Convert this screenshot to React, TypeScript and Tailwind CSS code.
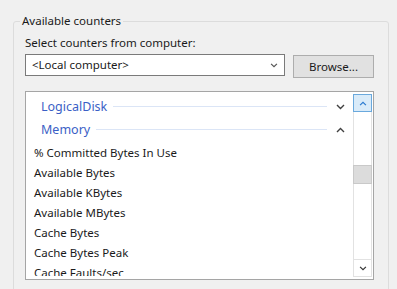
import React from "react";

const Chevron = ({ up = false, color = "#404040", w = 9, h = 6 }: { up?: boolean; color?: string; w?: number; h?: number }) => (
  <svg width={w} height={h} viewBox="0 0 9 6" fill="none">
    {up ? (
      <polyline points="1,5 4.5,1.5 8,5" stroke={color} strokeWidth="1.4" />
    ) : (
      <polyline points="1,1 4.5,4.5 8,1" stroke={color} strokeWidth="1.4" />
    )}
  </svg>
);

const items = [
  "% Committed Bytes In Use",
  "Available Bytes",
  "Available KBytes",
  "Available MBytes",
  "Cache Bytes",
  "Cache Bytes Peak",
  "Cache Faults/sec",
];

const Header = ({ label, up }: { label: string; up: boolean }) => (
  <div className="flex items-center h-[23px] pl-[15px]">
    <span className="text-[12.5px] text-[#3b5fc6] leading-[23px]">{label}</span>
    <div className="flex-1 h-px bg-[#dbe5f6] ml-[6px] mr-[6px]" />
    <div className="w-[14px] mr-[6px] flex justify-center">
      <Chevron up={up} />
    </div>
  </div>
);

export default function App() {
  return (
    <div
      className="w-[397px] h-[289px] overflow-hidden bg-[#f0f0f0] pt-[21px] text-[11.5px] text-[#1a1a1a]"
      style={{ fontFamily: '"Noto Sans", "Segoe UI", sans-serif' }}
    >
      <div className="relative ml-[13px] w-[376px] h-[290px] border border-[#dcdcdc] rounded-[3px] px-[11px] pt-[13px]">
        <span className="absolute left-[6px] top-[-9px] px-[2px] bg-[#f0f0f0] leading-[16px]">Available counters</span>
        <div className="leading-[16px]">Select counters from computer:</div>
        <div className="flex items-start mt-[3px]">
          <div className="w-[260px] h-[22px] bg-white border border-[#7a7a7a] flex items-center pl-[6px] pr-[6px]">
            <span className="flex-1 leading-[16px]">&lt;Local computer&gt;</span>
            <Chevron w={8} h={5} color="#555" />
          </div>
          <div className="ml-[8px] mt-[1px] w-[81px] h-[23px] bg-[#e1e1e1] border border-[#adadad] flex items-center justify-center leading-[16px]">
            Browse...
          </div>
        </div>
        <div className="mt-[13px] w-[349px] h-[189px] bg-white border border-[#a5a5a5] flex overflow-hidden">
          <div className="flex-1 h-[184px] pt-[3px] overflow-hidden">
            <Header label="LogicalDisk" up={false} />
            <Header label="Memory" up={true} />
            <div className="mt-[2px]">
              {items.map((t) => (
                <div key={t} className="h-[20px] leading-[20px] pl-[8px] whitespace-nowrap">
                  {t}
                </div>
              ))}
            </div>
          </div>
          <div className="w-[19px] mr-[1px] flex flex-col pt-[2px] pb-[2px]">
            <div className="h-[18px] bg-[#d9ebf9] border border-[#6aa9dd] flex items-center justify-center">
              <Chevron up w={8} h={5} color="#2a7ad0" />
            </div>
            <div className="flex-1 border-x border-[#e2e2e2] pt-[53px]">
              <div className="h-[19px] bg-[#dcdcdc] border-y border-[#c9c9c9] -mx-px border-x" />
            </div>
            <div className="h-[18px] border border-[#e2e2e2] flex items-center justify-center">
              <Chevron w={8} h={5} color="#333" />
            </div>
          </div>
        </div>
      </div>
    </div>
  );
}
